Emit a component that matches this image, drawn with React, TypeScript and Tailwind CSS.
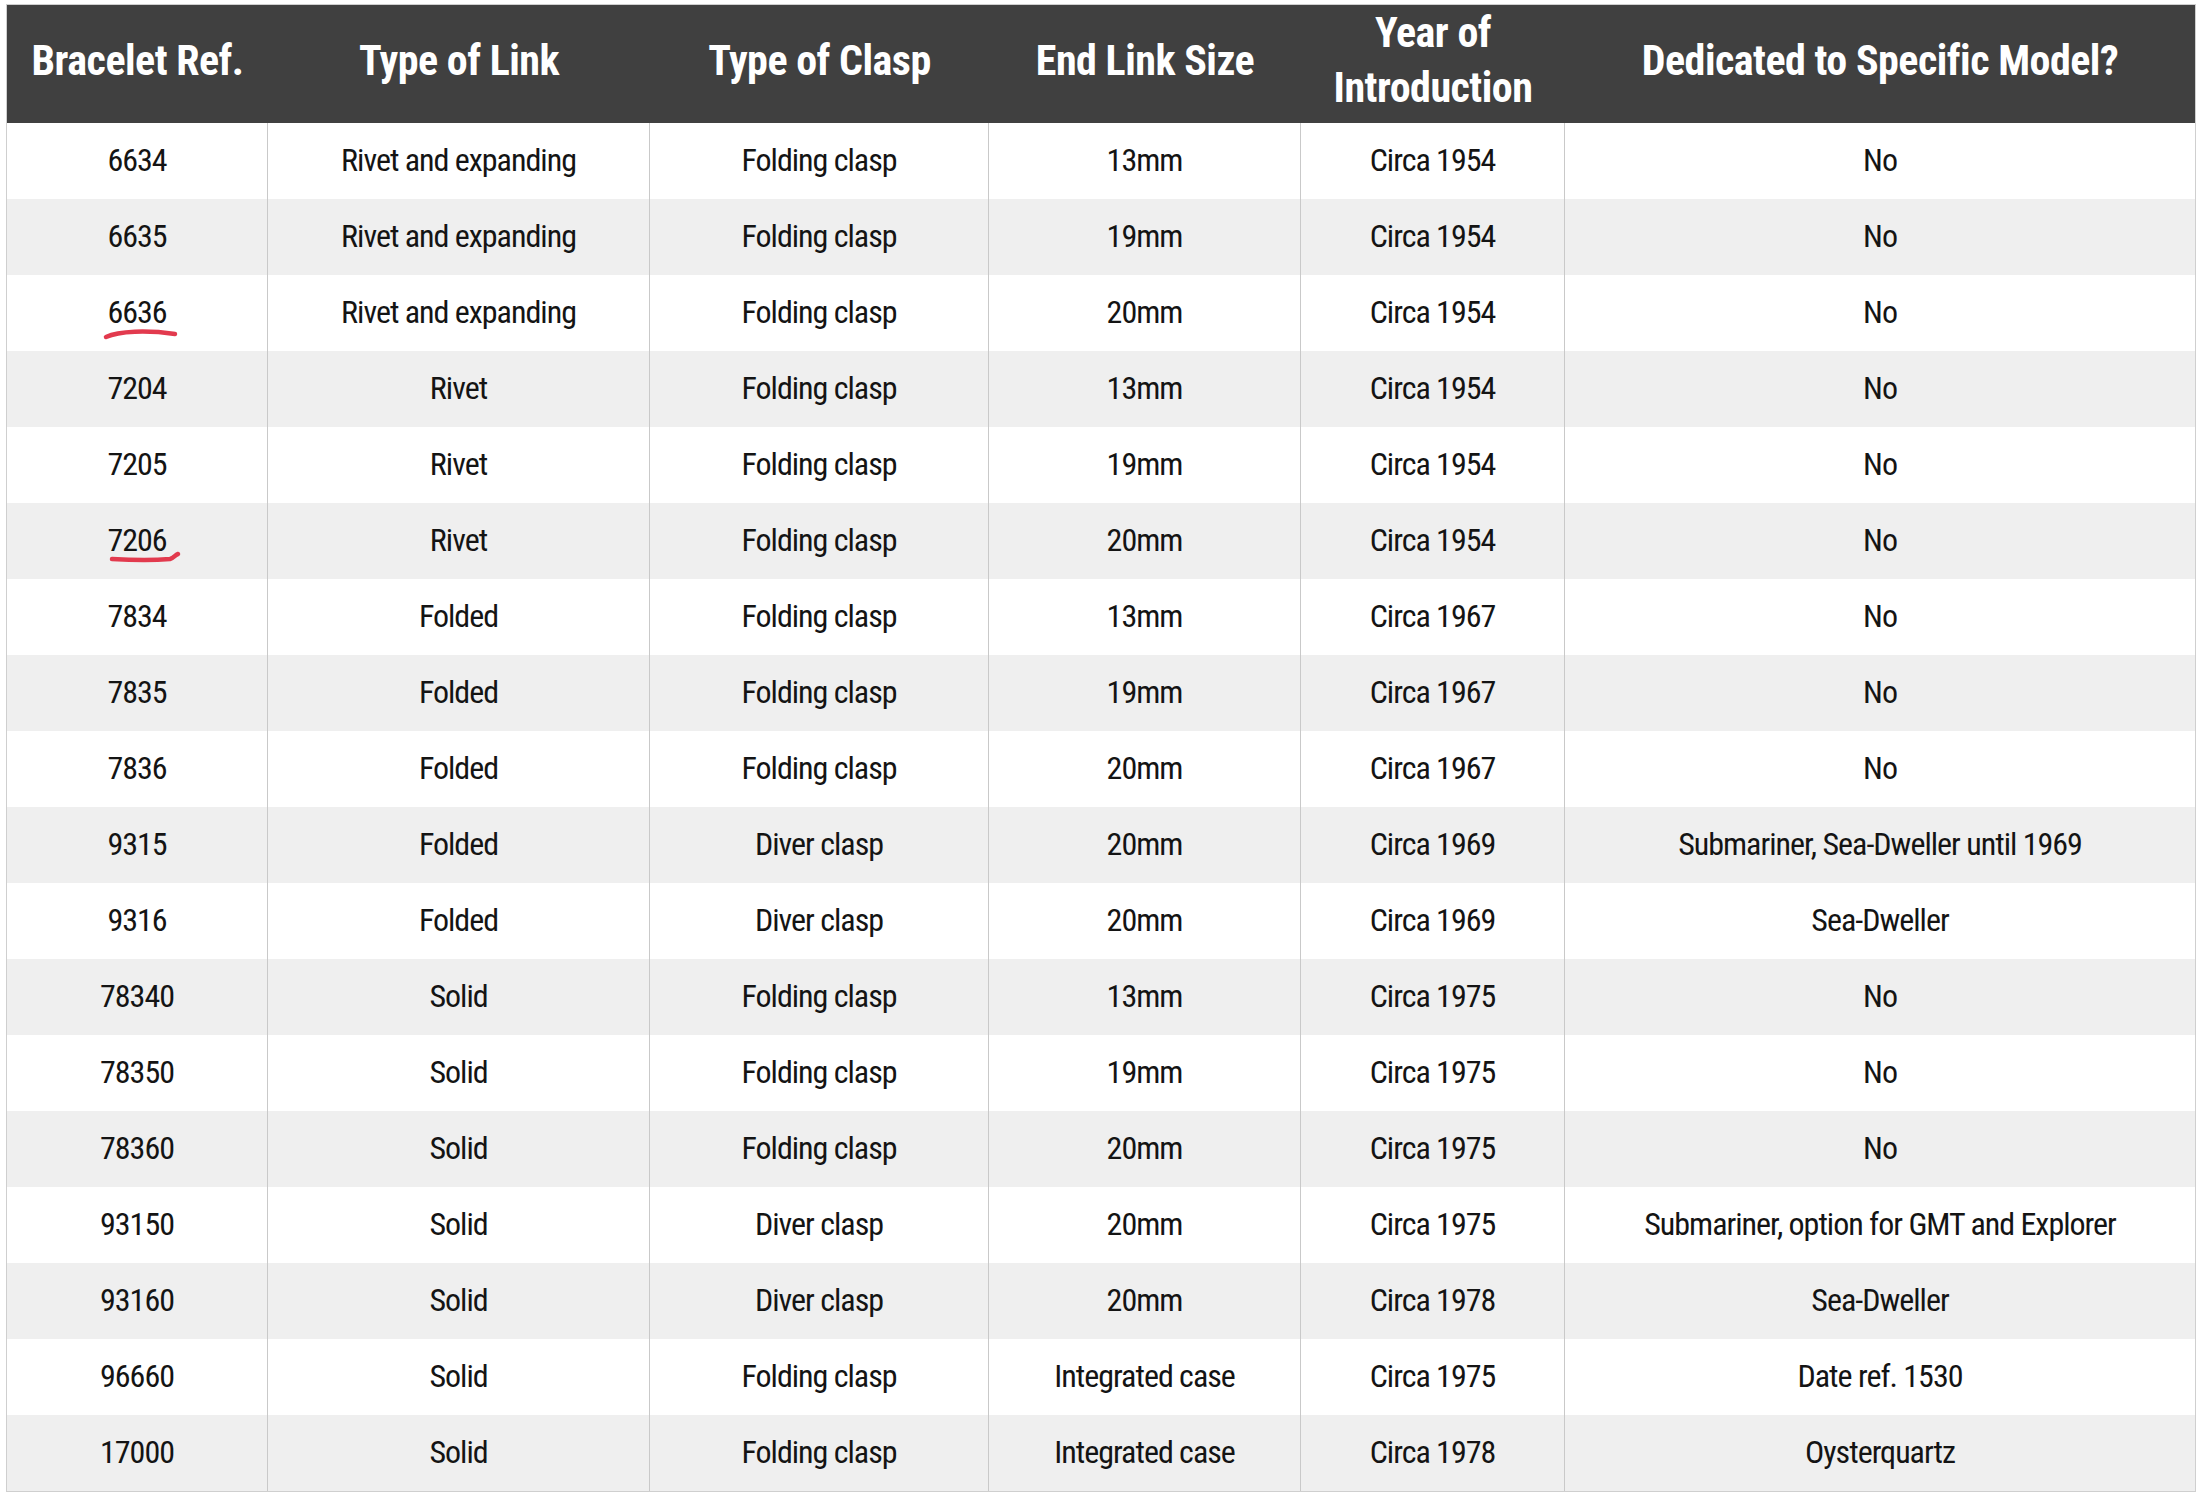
import React from "react";

const headers = [
  "Bracelet Ref.",
  "Type of Link",
  "Type of Clasp",
  "End Link Size",
  "Year of Introduction",
  "Dedicated to Specific Model?",
];

const rows: string[][] = [
  ["6634", "Rivet and expanding", "Folding clasp", "13mm", "Circa 1954", "No"],
  ["6635", "Rivet and expanding", "Folding clasp", "19mm", "Circa 1954", "No"],
  ["6636", "Rivet and expanding", "Folding clasp", "20mm", "Circa 1954", "No"],
  ["7204", "Rivet", "Folding clasp", "13mm", "Circa 1954", "No"],
  ["7205", "Rivet", "Folding clasp", "19mm", "Circa 1954", "No"],
  ["7206", "Rivet", "Folding clasp", "20mm", "Circa 1954", "No"],
  ["7834", "Folded", "Folding clasp", "13mm", "Circa 1967", "No"],
  ["7835", "Folded", "Folding clasp", "19mm", "Circa 1967", "No"],
  ["7836", "Folded", "Folding clasp", "20mm", "Circa 1967", "No"],
  ["9315", "Folded", "Diver clasp", "20mm", "Circa 1969", "Submariner, Sea-Dweller until 1969"],
  ["9316", "Folded", "Diver clasp", "20mm", "Circa 1969", "Sea-Dweller"],
  ["78340", "Solid", "Folding clasp", "13mm", "Circa 1975", "No"],
  ["78350", "Solid", "Folding clasp", "19mm", "Circa 1975", "No"],
  ["78360", "Solid", "Folding clasp", "20mm", "Circa 1975", "No"],
  ["93150", "Solid", "Diver clasp", "20mm", "Circa 1975", "Submariner, option for GMT and Explorer"],
  ["93160", "Solid", "Diver clasp", "20mm", "Circa 1978", "Sea-Dweller"],
  ["96660", "Solid", "Folding clasp", "Integrated case", "Circa 1975", "Date ref. 1530"],
  ["17000", "Solid", "Folding clasp", "Integrated case", "Circa 1978", "Oysterquartz"],
];

// hand-drawn red marks under a couple of refs
const Underline: React.FC<{ kind: "curve" | "hook" }> = ({ kind }) => (
  <svg className="absolute left-0 top-0 pointer-events-none" width="261" height="76" viewBox="0 0 261 76">
    {kind === "curve" ? (
      <path d="M99 62 C112 56 140 55 168 59" fill="none" stroke="#e23a4e" strokeWidth="4.5" strokeLinecap="round" />
    ) : (
      <path d="M105 56 C125 57 150 57 163 56 C167 55 168 52 171 51" fill="none" stroke="#e23a4e" strokeWidth="4.5" strokeLinecap="round" />
    )}
  </svg>
);

export default function App() {
  const font = "font-['Roboto_Condensed','Liberation_Sans_Narrow','DejaVu_Sans_Condensed','Arial_Narrow',Roboto,sans-serif]";
  return (
    <div className={`min-h-screen bg-white pt-[4px] pl-[6px] ${font}`}>
      <div className="w-[2190px] border border-[#cfcfcf]">
        <div className="grid grid-cols-[261px_382px_339px_312px_264px_630px] h-[118px] bg-[#404040] text-white">
          {headers.map((h) => (
            <div key={h} className="flex items-center justify-center text-center px-2 pb-[8px] text-[42px] leading-[55px] font-bold tracking-[-0.5px]">
              {h === "Year of Introduction" ? (
                <span>Year of<br />Introduction</span>
              ) : (
                h
              )}
            </div>
          ))}
        </div>
        {rows.map((r, i) => (
          <div
            key={r[0]}
            className={`grid grid-cols-[261px_382px_339px_312px_264px_630px] h-[76px] ${i % 2 === 1 ? "bg-[#efefef]" : "bg-white"}`}
          >
            {r.map((c, j) => (
              <div
                key={j}
                className={`relative flex items-center justify-center pb-[2px] text-[32px] tracking-[-1px] text-[#141414] ${j < 5 ? "border-r border-[#c9c9c9]" : ""}`}
              >
                {c}
                {r[0] === "6636" && j === 0 && <Underline kind="curve" />}
                {r[0] === "7206" && j === 0 && <Underline kind="hook" />}
              </div>
            ))}
          </div>
        ))}
      </div>
    </div>
  );
}
